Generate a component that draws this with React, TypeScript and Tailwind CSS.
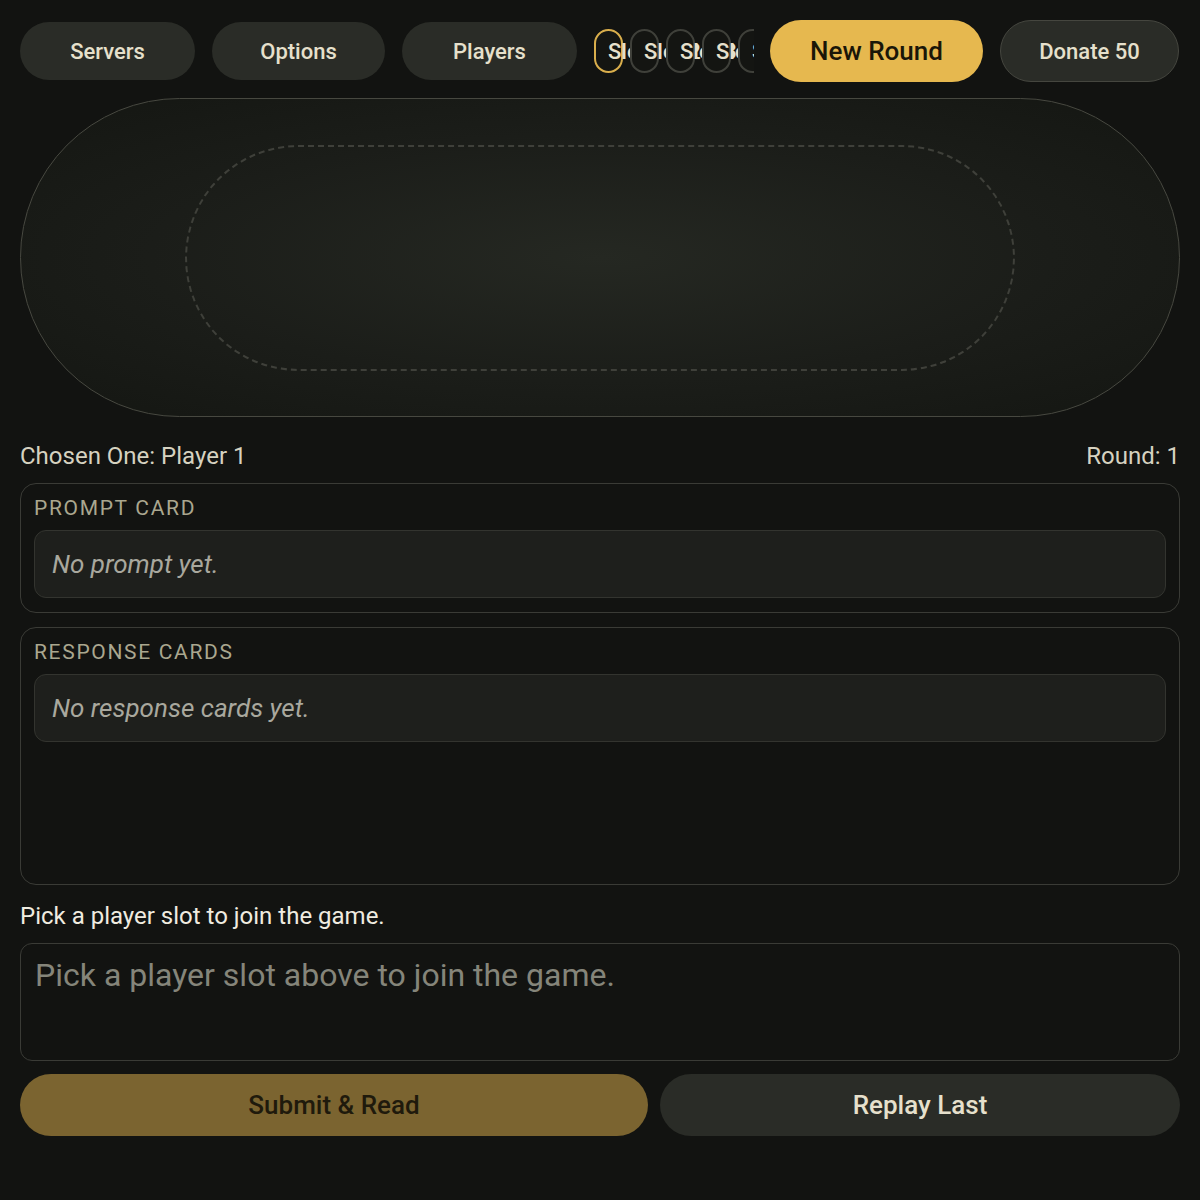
import React from "react";

const slots = ["Slot 1", "Slot 2", "Slot 3", "Slot 4", "Slot 5", "Slot 6", "Slot 7", "Slot 8"];

function TopBar() {
  return (
    <div className="flex items-center gap-[17px]">
      <button className="w-[175px] h-[58px] rounded-full bg-[#2a2c27] text-[#e6e0cc] text-[22px] font-medium">Servers</button>
      <button className="w-[173px] h-[58px] rounded-full bg-[#2a2c27] text-[#e6e0cc] text-[22px] font-medium">Options</button>
      <button className="w-[175px] h-[58px] rounded-full bg-[#2a2c27] text-[#e6e0cc] text-[22px] font-medium">Players</button>
      <div className="w-[160px] flex gap-[7px] overflow-hidden">
        {slots.map((s, i) => (
          <button
            key={s}
            className={
              "relative shrink-0 w-[29px] h-[44px] rounded-[15px] bg-[#141512] pl-[12px] text-left text-[22px] font-medium text-[#e6e0cc] whitespace-nowrap border-2 " +
              (i === 0 ? "border-[#d9ae4c]" : "border-[#3f403a]")
            }
          >
            {s}
          </button>
        ))}
      </div>
      <button className="ml-[-1px] w-[213px] h-[62px] rounded-full bg-[#e6b84f] text-[#1a1608] text-[26px] font-medium">New Round</button>
      <button className="w-[179px] h-[62px] rounded-full bg-[#2a2c27] border-[1.5px] border-[#45463f] text-[#e6e0cc] text-[22px] font-medium">Donate 50</button>
    </div>
  );
}

function Table() {
  return (
    <div className="h-[319px] rounded-full border-[1.5px] border-[#474840] bg-[radial-gradient(ellipse_at_center,#252822_0%,#1b1d19_55%,#141612_100%)] px-[164px] pt-[46px] pb-[45px]">
      <div className="h-full rounded-full border-2 border-dashed border-[#3f403a]" />
    </div>
  );
}

function CardSection({ label, empty, tall }: { label: string; empty: string; tall?: boolean }) {
  return (
    <div className={"rounded-[16px] border-[1.5px] border-[#3a3b36] px-[13px] pt-[12px] flex flex-col gap-[10px] " + (tall ? "h-[258px]" : "h-[130px]")}>
      <div className="text-[21px] leading-[24px] tracking-[0.08em] text-[#aaa78f]">{label}</div>
      <div className="h-[68px] rounded-[12px] bg-[#1e1f1c] border-[1.5px] border-[#33342f] flex items-center px-[17px] text-[26px] italic text-[#a9a89e]">
        {empty}
      </div>
    </div>
  );
}

export default function App() {
  return (
    <div className="min-h-[1200px] bg-[#121311] px-5 pt-5 font-['Roboto',sans-serif]">
      <TopBar />
      <div className="mt-4">
        <Table />
      </div>
      <div className="mt-[24px] flex justify-between text-[24px] leading-[30px] text-[#d6d2c0]">
        <span>Chosen One: Player 1</span>
        <span>Round: 1</span>
      </div>
      <div className="mt-[12px] flex flex-col gap-[14px]">
        <CardSection label="PROMPT CARD" empty="No prompt yet." />
        <CardSection label="RESPONSE CARDS" empty="No response cards yet." tall />
      </div>
      <div className="mt-[16px] text-[24px] leading-[30px] text-[#f0ece0]">Pick a player slot to join the game.</div>
      <textarea
        className="mt-[12px] block w-full h-[118px] rounded-[12px] border-[1.5px] border-[#3a3b36] bg-transparent px-[14px] pt-[7px] text-[32px] text-[#e6e0cc] placeholder:text-[#85857a] resize-none outline-none"
        placeholder="Pick a player slot above to join the game."
      />
      <div className="mt-[13px] flex gap-[12px]">
        <button className="w-[628px] h-[62px] rounded-full bg-[#7b6430] text-[#1f1a0c] text-[26px] font-medium">Submit &amp; Read</button>
        <button className="flex-1 h-[62px] rounded-full bg-[#2a2c27] text-[#e6e0cc] text-[26px] font-medium">Replay Last</button>
      </div>
    </div>
  );
}
